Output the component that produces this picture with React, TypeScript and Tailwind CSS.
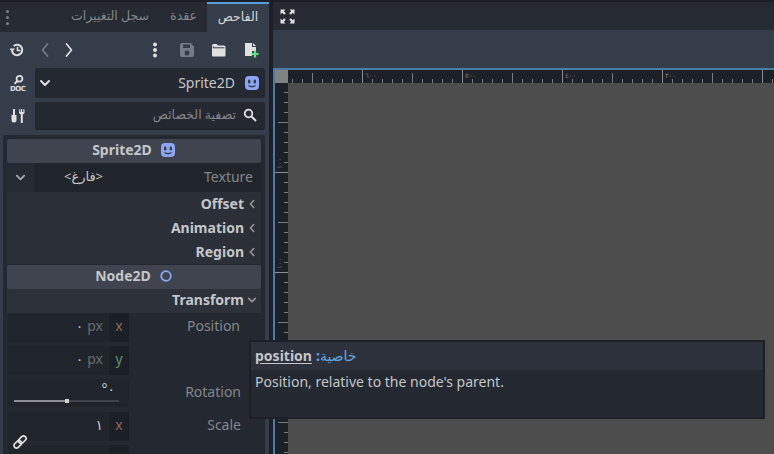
import type { ReactNode } from 'react'

const uiFont = "font-['Noto_Sans','DejaVu_Sans',sans-serif]"

function SpriteIcon({ size = 16 }: { size?: number }) {
  return (
    <svg width={size} height={size} viewBox="0 0 16 16">
      <rect x="1" y="1" width="14" height="14" rx="4" fill="#8da5f3" />
      <rect x="4" y="4.500" width="2.400" height="4" rx="1.200" fill="#363d4a" />
      <rect x="9.600" y="4.500" width="2.400" height="4" rx="1.200" fill="#363d4a" />
      <path d="M4.500 10.500q3.500 2.500 7 0" stroke="#363d4a" strokeWidth="1.300" fill="none" />
    </svg>
  )
}

function Chevron({ dir, color = '#e0e0e0', size = 12 }: { dir: 'left' | 'right' | 'down'; color?: string; size?: number }) {
  const d = dir === 'left' ? 'M8 2 4 6l4 4' : dir === 'right' ? 'M4 2l4 4-4 4' : 'M2 4l4 4 4-4'
  return (
    <svg width={size} height={size} viewBox="0 0 12 12">
      <path d={d} stroke={color} strokeWidth="2" fill="none" strokeLinecap="round" strokeLinejoin="round" />
    </svg>
  )
}

function NavArrow({ back = false }: { back?: boolean }) {
  return (
    <svg width="8" height="14" viewBox="0 0 8 14">
      <path
        d={back ? 'M6.500 1 1.500 7l5 6' : 'M1.500 1l5 6-5 6'}
        stroke={back ? '#767b84' : '#e0e0e0'}
        strokeWidth="1.700"
        fill="none"
        strokeLinecap="round"
        strokeLinejoin="round"
      />
    </svg>
  )
}

function ToolIcon({ children, w = 16 }: { children: ReactNode; w?: number }) {
  return (
    <svg width={w} height="16" viewBox={`0 0 ${w} 16`} className="shrink-0">
      {children}
    </svg>
  )
}

function Ruler() {
  const ticks = []
  for (let x = 292; x < 774; x += 10) {
    const major = (x - 362) % 100 === 0
    const mid = (x - 312) % 100 === 0
    const top = major ? 70 : mid ? 73 : 79
    ticks.push(<path key={x} d={`M${x - 288 + 0.5} ${top - 70}V13`} stroke={major ? '#8a8d92' : '#777a80'} />)
  }
  const labels = [
    [365, '٦٠٠'],
    [465, '٥٠٠'],
    [565, '٤٠٠'],
    [665, '٣٠٠'],
  ] as const
  return (
    <svg width="486" height="13" viewBox="0 0 486 13" className="block shrink-0">
      {ticks}
      {labels.map(([x, t]) => (
        <text key={x} x={x - 288} y="8" fontSize="7" fill="#777a80" fontFamily="DejaVu Sans">
          {t}
        </text>
      ))}
    </svg>
  )
}

function SideRuler() {
  const ticks = []
  for (let y = 92; y < 454; y += 10) {
    const major = (y - 172) % 100 === 0
    const mid = (y - 122) % 100 === 0
    const left = major ? 275 : mid ? 278 : 284
    ticks.push(<path key={y} d={`M${left - 275} ${y - 83 + 0.5}H13`} stroke={major ? '#8a8d92' : '#777a80'} />)
  }
  return (
    <svg width="13" height="371" viewBox="0 0 13 371" className="block shrink-0">
      {ticks}
      {[169, 269].map((y) => (
        <text key={y} x="0" y="0" fontSize="7" fill="#777a80" fontFamily="DejaVu Sans" transform={`translate(7 ${y - 83}) rotate(-90)`}>
          ١٠٠
        </text>
      ))}
    </svg>
  )
}

function Section({ title, children }: { title: string; children: ReactNode }) {
  return (
    <div className="flex h-6 shrink-0 items-center justify-center gap-2 rounded-[2px] bg-[#3f444e] pb-[2px] font-bold text-[#c4c6c9]">
      <span>{title}</span>
      {children}
    </div>
  )
}

function Group({ title, open = false, active = false }: { title: string; open?: boolean; active?: boolean }) {
  return (
    <div className={`flex h-6 shrink-0 items-center justify-end gap-[3px] pr-1 font-bold text-[#c4c6c9] ${active ? 'bg-[#2c313a] pb-[2px]' : ''}`}>
      <span>{title}</span>
      <Chevron dir={open ? 'down' : 'left'} color="#8f9297" size={10} />
    </div>
  )
}

function Axis({ value, unit, axis, color, link = false }: { value: string; unit?: string; axis: string; color: string; link?: boolean }) {
  return (
    <div className="relative flex h-[29px] w-[121px] shrink-0 items-center justify-end rounded-[2px] bg-[#20252c]">
      <span className="mr-[6px] pb-[3px] text-[#676b71]">
        {unit ? <span className="mr-1 text-[#c4c6c9]">{value}</span> : <span className="text-[#c4c6c9]">{value}</span>}
        {unit}
      </span>
      <span className="flex h-full w-5 items-center justify-center rounded-[2px] bg-[#1b1f26] pb-1 leading-none" style={{ color }}>
        {axis}
      </span>
      {link && (
        <svg width="16" height="16" viewBox="0 0 16 16" className="absolute bottom-[-9px] left-1 z-10">
          <g fill="none" stroke="#e0e0e0" strokeWidth="1.700" transform="rotate(-45 8 8)">
            <rect x="0.500" y="5.500" width="8.500" height="5" rx="2.500" />
            <rect x="7" y="5.500" width="8.500" height="5" rx="2.500" />
          </g>
        </svg>
      )}
    </div>
  )
}

export default function App() {
  return (
    <div className={`relative flex h-[454px] w-[774px] overflow-hidden bg-[#1c2026] pt-[2px] text-[14px] leading-5 ${uiFont}`}>
      <aside className="flex w-[269px] shrink-0 flex-col overflow-hidden bg-[#363d4a]">
        <div className="flex h-[30px] shrink-0 items-stretch bg-[#252a33]">
          <div className="flex w-[14px] flex-col items-center justify-center gap-[3px]">
            <span className="size-[3px] rounded-full bg-[#7f8389]" />
            <span className="size-[3px] rounded-full bg-[#7f8389]" />
            <span className="size-[3px] rounded-full bg-[#7f8389]" />
          </div>
          <div className="ml-auto flex items-center gap-[21px] pb-[2px] pr-[10px] text-[12.500px] text-[#83868b]" dir="rtl">
            <span>عقدة</span>
            <span>سجل التغييرات</span>
          </div>
          <div className="flex w-[62px] items-center justify-center border-t-2 border-[#569eda] bg-[#363d4a] pb-[2px] text-[12.500px] text-[#d5d6d8]">
            الفاحص
          </div>
        </div>

        <div className="flex h-9 shrink-0 items-center pl-[9px] pr-[10px]">
          <ToolIcon>
            <path d="M3 9a5.200 5.200 0 1 0 1.700-5" fill="none" stroke="#e0e0e0" strokeWidth="2" />
            <path d="M0.500 6.500h5.500L3 10Z" fill="#e0e0e0" />
            <path d="M8.500 5v3.500h3" fill="none" stroke="#e0e0e0" strokeWidth="1.600" />
          </ToolIcon>
          <span className="ml-4 flex">
            <NavArrow back />
          </span>
          <span className="ml-4 flex">
            <NavArrow />
          </span>
          <div className="ml-auto flex items-center gap-4">
            <ToolIcon>
              <circle cx="8" cy="2.500" r="2" fill="#e0e0e0" />
              <circle cx="8" cy="8" r="2" fill="#e0e0e0" />
              <circle cx="8" cy="13.500" r="2" fill="#e0e0e0" />
            </ToolIcon>
            <ToolIcon>
              <path d="M2.500 1h9L15 4.500V13a2 2 0 0 1-2 2H3a2 2 0 0 1-2-2V2.500ZM4 2.500V6h7V2.500ZM8 8.500a2.500 2.500 0 1 0 .01 0Z" fill="#767b84" fillRule="evenodd" />
            </ToolIcon>
            <ToolIcon>
              <path d="M1 3.500A1.500 1.500 0 0 1 2.500 2h3L7 3.500h6A1.500 1.500 0 0 1 14.500 5v8.500A1 1 0 0 1 13.500 14.500H2A1 1 0 0 1 1 13.500Z" fill="#e0e0e0" />
              <path d="M2.200 4.200V5.800H13.500" stroke="#363d4a" fill="none" />
            </ToolIcon>
            <ToolIcon>
              <path d="M2 1h7v4h4v4H9v5H2Z M10 1l3 3h-3Z" fill="#e0e0e0" />
              <path d="M12 8.500v7M8.500 12h7" stroke="#5fe37d" strokeWidth="2.200" />
            </ToolIcon>
          </div>
        </div>

        <div className="flex h-[30px] shrink-0 items-center pr-1">
          <div className="flex w-[35px] justify-center">
            <ToolIcon w={18}>
              <circle cx="10.500" cy="3.800" r="2.900" fill="none" stroke="#e0e0e0" strokeWidth="1.800" />
              <path d="M8.500 6 5.500 8.800" stroke="#e0e0e0" strokeWidth="2" />
              <text x="1" y="15.500" fontSize="7" fontWeight="700" fill="#e0e0e0" fontFamily="DejaVu Sans" textLength="16">
                DOC
              </text>
            </ToolIcon>
          </div>
          <div className="flex h-full flex-1 items-center justify-between rounded-[2px] bg-[#232831] pl-[4px] pr-[5px] text-[#c4c6c9]">
            <Chevron dir="down" />
            <div className="flex items-center gap-[9px]">
              <span>Sprite2D</span>
              <SpriteIcon />
            </div>
          </div>
        </div>

        <div className="mt-1 flex h-7 shrink-0 items-center pr-1">
          <div className="flex w-[35px] justify-center">
            <ToolIcon>
              <path d="M3 1h2v6h1.500v5a2.500 2.500 0 0 1-5 0V7H3Z" fill="#e0e0e0" />
              <path d="M9 1.500V5l1.800 1.500V15h2V6.500L14.500 5V1.500L13.300 1v3h-1.200V1h-1.400v3H9.800V1Z" fill="#e0e0e0" />
            </ToolIcon>
          </div>
          <div className="flex h-full flex-1 items-center justify-end gap-[7px] rounded-[2px] border-b-2 border-[#1f232a] bg-[#232831] pr-2 text-[12.500px] text-[#83868b]" dir="ltr">
            <span>تصفية الخصائص</span>
            <svg width="14" height="14" viewBox="0 0 14 14">
              <circle cx="5.500" cy="5.500" r="3.800" fill="none" stroke="#e0e0e0" strokeWidth="1.800" />
              <path d="M8.500 8.500 13 13" stroke="#e0e0e0" strokeWidth="2" />
            </svg>
          </div>
        </div>

        <div className="ml-[3px] mr-1 mt-[5px] flex min-h-0 flex-1 flex-col rounded-t-[2px] bg-[#232831] px-1 pt-1">
          <Section title="Sprite2D">
            <SpriteIcon />
          </Section>
          <div className="flex h-[29px] shrink-0 items-stretch bg-[#20252c]">
            <div className="flex w-[27px] items-center justify-center bg-[#252a33]">
              <Chevron dir="down" color="#a8abaf" size={11} />
            </div>
            <div className="flex w-[99px] items-center justify-center pb-1 text-[13px] text-[#c4c6c9]">{'<فارغ>'}</div>
            <div className="ml-auto flex items-center pb-[2px] pr-2 text-[#83868b]">Texture</div>
          </div>
          <div className="shrink-0 bg-[#2a2f38]">
            <Group title="Offset" />
            <Group title="Animation" />
            <Group title="Region" />
          </div>
          <div className="shrink-0 pt-px">
            <Section title="Node2D">
              <svg width="14" height="14" viewBox="0 0 14 14">
                <circle cx="7" cy="7" r="4.800" fill="none" stroke="#8da5f3" strokeWidth="1.800" />
              </svg>
            </Section>
          </div>
          <Group title="Transform" open active />

          <div className="flex shrink-0">
            <div className="ml-px flex flex-col gap-1">
              <Axis value="٠" unit="px" axis="x" color="#8e6a5b" />
              <Axis value="٠" unit="px" axis="y" color="#5f8f70" />
            </div>
            <span className="ml-auto mr-[21px] mt-[3px] text-[#83868b]">Position</span>
          </div>

          <div className="mt-1 flex shrink-0">
            <div className="relative ml-px h-[28px] w-[121px] rounded-[2px] bg-[#20252c] text-right">
              <span className="absolute right-[14px] top-0 text-[#c4c6c9]">°٠</span>
              <div className="absolute bottom-[5px] left-[6px] right-[10px] h-[2px] bg-[#3e434c]">
                <div className="relative h-full w-1/2 bg-[#8b8e93]">
                  <span className="absolute -right-[2px] -top-[1px] size-1 bg-[#d0d1d3]" />
                </div>
              </div>
            </div>
            <span className="ml-auto mr-5 mt-[3px] text-[#83868b]">Rotation</span>
          </div>

          <div className="mt-[5px] flex shrink-0">
            <div className="ml-px flex flex-col gap-1">
              <Axis value="١" axis="x" color="#8e6a5b" link />
              <Axis value="" axis="" color="#5f8f70" />
            </div>
            <span className="ml-auto mr-5 mt-[3px] text-[#83868b]">Scale</span>
          </div>
        </div>
      </aside>

      <main className="ml-1 flex min-w-0 flex-1 flex-col">
        <div className="flex h-[28px] shrink-0 items-center bg-[#252a33] pl-[7px]">
          <svg width="15" height="15" viewBox="0 0 15 15">
            <path d="M0.500 0.500h5l-1.700 1.700 2 2-1.600 1.600-2-2L0.500 5.500ZM14.500 0.500h-5l1.700 1.700-2 2 1.600 1.600 2-2 1.700 1.700ZM0.500 14.500h5l-1.700-1.700 2-2-1.600-1.600-2 2L0.500 9.500ZM14.500 14.500h-5l1.700-1.700-2-2 1.600-1.600 2 2 1.700-1.700Z" fill="#e0e0e0" />
          </svg>
        </div>
        <div className="h-[38px] shrink-0 bg-[#363d4a]" />
        <div className="flex min-h-0 flex-1 flex-col border-l-2 border-t-2 border-[#4c7ba3]">
          <div className="flex shrink-0 bg-[#1c2027]">
            <div className="h-[13px] w-[13px] shrink-0 bg-[#828282]" />
            <Ruler />
          </div>
          <div className="flex min-h-0 flex-1">
            <div className="w-[13px] shrink-0 bg-[#1c2027]">
              <SideRuler />
            </div>
            <div className="flex-1 bg-[#4d4d4d]" />
          </div>
        </div>
      </main>

      <div className="absolute left-[249px] top-[340px] flex h-[79px] w-[516px] flex-col border-2 border-[#1c2026] bg-[#232831]">
        <div className="flex h-[28px] shrink-0 items-center bg-[#2c313b] pl-[4px]">
          <span className="font-bold text-[#c4c6c9] underline underline-offset-2">position</span>
          <span className="ml-1 font-bold text-[#61a9e0]">:</span>
          <span className="text-[14px] text-[#61a9e0]">خاصية</span>
        </div>
        <div className="pl-[4px] pt-[2px] text-[#c4c6c9]">Position, relative to the node's parent.</div>
      </div>
    </div>
  )
}
